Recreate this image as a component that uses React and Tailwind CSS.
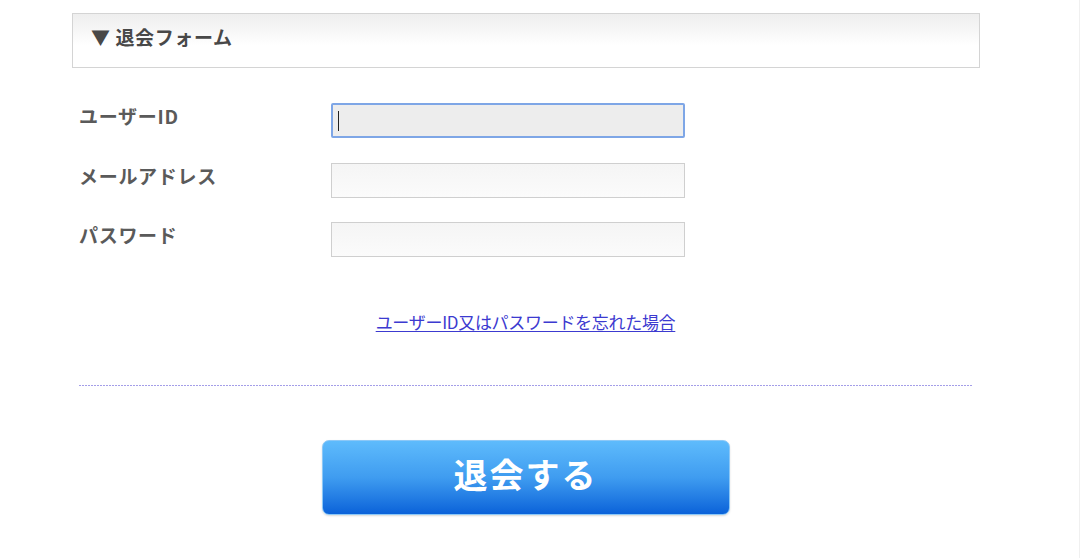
const fields = [
    { label: 'ユーザーID', focused: true },
    { label: 'メールアドレス' },
    { label: 'パスワード', type: 'password' },
];

const App = () => {
    return (
        <div className="min-h-screen bg-white font-['Noto_Sans_CJK_JP','Liberation_Sans',sans-serif] border-r border-[#f0f0f0]">
            <div className="pl-[72px] pt-[13px]">
                {/* section title */}
                <div className="w-[908px] h-[55px] border border-[#d4d4d4] bg-linear-to-b from-[#eeeeee] to-white to-60% flex items-center pl-[18px] pb-[6px]">
                    <span className="text-[19px] font-bold text-[#484848] tracking-[0.6px]">▼ 退会フォーム</span>
                </div>

                {/* form */}
                <div className="pl-[7px] w-[900px]">
                    <div className="mt-[35px] flex flex-col gap-[24.5px]">
                        {fields.map((f) => (
                            <div key={f.label} className="flex items-start">
                                <div className="w-[252px] text-[19px] font-bold text-[#5a5a5a] leading-[26px] tracking-[0.7px]">{f.label}</div>
                                {f.focused ? (
                                    <div className="w-[354px] h-[35px] border-2 border-[#7ea6e6] rounded-[2px] bg-[#ededed] flex items-center pl-[5px]">
                                        <div className="w-px h-[20px] bg-[#222]"></div>
                                    </div>
                                ) : (
                                    <input
                                        type={f.type || 'text'}
                                        className="w-[354px] h-[35px] border border-[#cfcfcf] bg-linear-to-b from-[#f5f5f5] to-[#fbfbfb] outline-none"
                                    />
                                )}
                            </div>
                        ))}
                    </div>

                    {/* forgot link */}
                    <div className="mt-[52px] flex justify-center">
                        <a href="#" className="text-[17px] text-[#3c3ad0] underline underline-offset-2 tracking-[-0.3px]">ユーザーID又はパスワードを忘れた場合</a>
                    </div>

                    {/* divider */}
                    <div className="mt-[50px] h-px bg-[repeating-linear-gradient(to_right,#a49ee8_0px,#a49ee8_2px,transparent_2px,transparent_3px)]"></div>

                    {/* submit */}
                    <div className="mt-[54px] flex justify-center">
                        <button className="w-[408px] h-[75px] rounded-[7px] border border-[#8cc8f7] bg-linear-to-b from-[#5ebbfc] via-[#3f9cf0] via-50% to-[#0a62d9] text-white text-[34px] font-bold tracking-[2px] shadow-[0_1px_2px_rgba(0,0,0,0.15)] flex items-center justify-center pb-[7px]">
                            退会する
                        </button>
                    </div>
                </div>
            </div>
        </div>
    );
};

export default App;
